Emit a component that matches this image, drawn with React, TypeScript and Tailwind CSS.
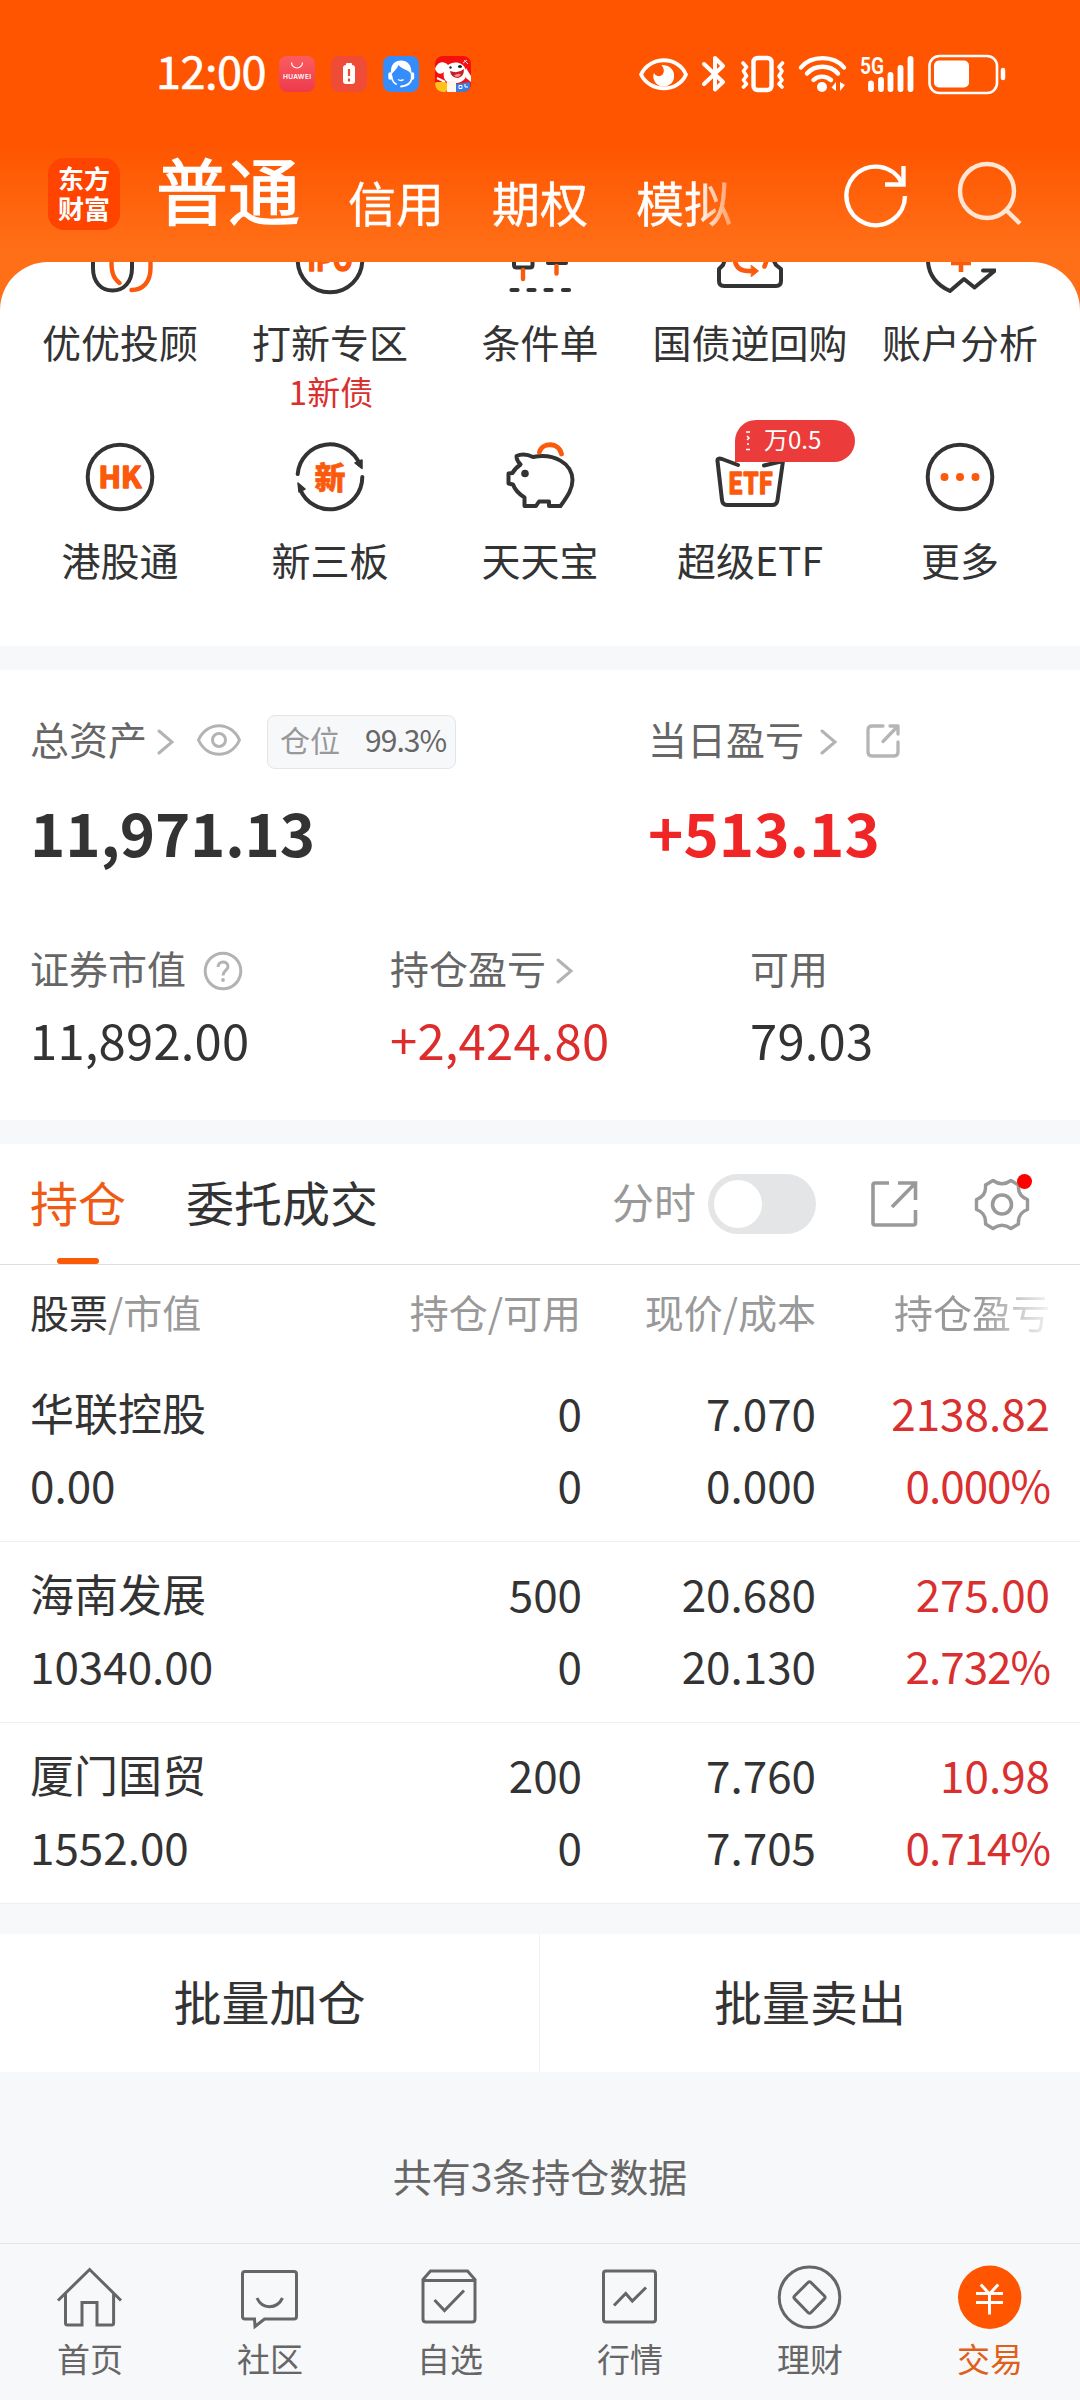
import type { ReactNode } from 'react'

const INK = '#333333'
const ORANGE = '#fb5a0c'

function Chevron() {
  return (
    <svg width="18" height="28" viewBox="0 0 18 28" fill="none" stroke="#b3b3b3" strokeWidth="3" strokeLinecap="round">
      <path d="M2 3 L15 14 L2 25" />
    </svg>
  )
}

function StatusBar() {
  return (
    <div className="flex h-[146px] items-start pt-[53px] pl-[156px] text-white">
      <span className="w-[123px] -translate-y-[3px] text-[45px] leading-[40px] tracking-[-0.5px] [-webkit-text-stroke:0.6px_white]">12:00</span>
      <div className="flex gap-4 pt-[3px]">
        <svg width="36" height="36" viewBox="0 0 36 36">
          <defs>
            <linearGradient id="store" x1="0" y1="0" x2="0" y2="1">
              <stop offset="0" stopColor="#fb5d60" />
              <stop offset="1" stopColor="#ee3a4c" />
            </linearGradient>
          </defs>
          <rect width="36" height="36" rx="8" fill="url(#store)" />
          <path d="M12.500 6.500a5.500 5.500 0 0 0 11 0" fill="none" stroke="#fff" strokeWidth="1.200" />
          <text x="4" y="23" fontSize="6.600" fontWeight="600" fill="#fff" fontFamily="Inter, sans-serif" textLength="28">HUAWEI</text>
        </svg>
        <svg width="36" height="36" viewBox="0 0 36 36">
          <rect width="36" height="36" rx="8" fill="#ee4c36" />
          <rect x="15" y="7" width="6" height="3" rx="1" fill="#fff" />
          <rect x="12" y="9" width="12" height="19" rx="3" fill="#fff" />
          <path d="M18 13v7M18 22.500v3" stroke="#ee4a33" strokeWidth="2.200" />
        </svg>
        <svg width="36" height="36" viewBox="0 0 36 36">
          <rect width="36" height="36" rx="8" fill="#358cfb" />
          <path d="M8 19C7 8 12 4.500 18 4.500S29 8 28.500 19C26 13 19 14 15.500 9C14 13 11 15 8 19Z" fill="#fff" />
          <path d="M7 18v4M29.500 18v4" stroke="#fff" strokeWidth="3.400" strokeLinecap="round" />
          <path d="M8.500 20C9 25 11 27 13 28M29 22c-1 5-5 8-11 8.500" fill="none" stroke="#fff" strokeWidth="1.800" strokeLinecap="round" />
          <path d="M15 23.500q3 2 5.500 0" fill="none" stroke="#fff" strokeWidth="1.500" />
        </svg>
        <svg width="36" height="36" viewBox="0 0 36 36">
          <clipPath id="mascot"><rect width="36" height="36" rx="8" /></clipPath>
          <g clipPath="url(#mascot)">
            <rect width="36" height="36" fill="#f5100f" />
            <path d="M0 13C3 5 9 5 13 9C18 5 28 5 31 14C33 21 29 26 22 27H14C9 25 8 20 9 16C6 19 2 18 0 13Z" fill="#fff" />
            <path d="M31 12L36 20V26L31 22Z" fill="#fff" />
            <circle cx="15.500" cy="11.500" r="1.200" fill="#222" />
            <ellipse cx="25" cy="10.500" rx="2" ry="1.500" fill="#222" />
            <path d="M15 15Q23 18 29 13Q29 21 23 22Q16 22 15 15Z" fill="#c51f28" />
            <path d="M19 19.500Q23 16.500 26 18.500Q23 23 19 19.500Z" fill="#ff8a8a" />
            <path d="M2 22L10 26" stroke="#fff" strokeWidth="2" />
            <rect y="26" width="12" height="10" rx="2" fill="#ffc21a" />
            <path d="M12 25h9v11h-9z" fill="#fff6ec" />
            <path d="M21 28l14-2v10H21z" fill="#3a7de0" />
            <path d="M24 29.500h3v3h-3zM30 28v3h3" fill="none" stroke="#fff" />
            <path d="M28 7l4-3M29 4l4 4" stroke="#cfe0ff" />
          </g>
        </svg>
      </div>
      <div className="ml-[167px]">
        <svg width="368" height="42" viewBox="638 52 368 42" fill="none" stroke="#fff" strokeLinecap="round" strokeLinejoin="round">
          <path d="M641 73.500C650 54.500 678 54.500 686 73.500C678 92 650 92 641 73.500Z" strokeWidth="3.800" />
          <path d="M661.500 64C671 64 675 70 674 77C672 87 658 89 654 79C653 76 653 74 654 72C656 76 661 76 663 73C664.500 70 664 67 661.500 64Z" fill="#fff" stroke="none" />
          <path d="M704 63L723 81L715 88.500V57L723 65L704 83" strokeWidth="4" />
          <rect x="753.500" y="57" width="18" height="32" rx="4" strokeWidth="4.400" />
          <path d="M743 62l3.500 4-3 4 3 5-3 4 3 4-3 3M782.500 62l-3.500 4 3 4-3 5 3 4-3 4 3 3" strokeWidth="3.600" />
          <path d="M801 66.500C811 54 834 54 844 66.500M807 72.500C815 63.500 830 63.500 838 72.500M813.500 79C818 74.500 826 74.500 831 79" strokeWidth="4.400" />
          <circle cx="822" cy="86" r="5" fill="#fff" stroke="none" />
          <path d="M836 81v9l-4.500-3.500zM840 81v9l5-6z" fill="#fff" stroke="none" />
          <path d="M871 82.500v5.500M881 79v9M890.500 74v14M900.500 67v21M910.500 58v30" strokeWidth="5.800" />
          <rect x="929.500" y="55" width="67.500" height="37" rx="10" strokeWidth="2.600" />
          <rect x="934" y="59.500" width="35" height="27" rx="5" fill="#fff" stroke="none" />
          <path d="M1003 69v8" strokeWidth="4.500" />
          <text x="860" y="72.500" fontSize="23" fontWeight="600" fill="#fff" stroke="none" fontFamily="Roboto, sans-serif" textLength="24" lengthAdjust="spacingAndGlyphs">5G</text>
        </svg>
      </div>
    </div>
  )
}

function TopBar() {
  return (
    <div className="flex h-[116px] items-start pl-12 text-white">
      <div className="mt-3 flex h-[72px] w-[72px] flex-col items-center justify-center rounded-2xl bg-[#ff4400] text-[26px] leading-[30px] font-bold">
        <span className="-translate-y-px">东方</span>
        <span className="-translate-y-px">财富</span>
      </div>
      <div className="ml-9 flex items-baseline gap-12 text-[48px] leading-none [mask-image:linear-gradient(to_right,black_540px,transparent_596px)]">
        <span className="text-[72px] leading-[84px] [-webkit-text-stroke:1.4px_white]">普通</span>
        <span className="translate-y-[3px] [-webkit-text-stroke:0.4px_white]">信用</span>
        <span className="translate-y-[3px] [-webkit-text-stroke:0.4px_white]">期权</span>
        <span className="translate-y-[3px] [-webkit-text-stroke:0.4px_white]">模拟</span>
      </div>
      <svg className="ml-[109px]" width="190" height="90" viewBox="841 146 190 90" fill="none" stroke="#fff" strokeWidth="4.400">
        <path d="M905 196A29.300 29.300 0 1 1 902 183" />
        <path d="M903.500 166V184.500H885" />
        <g stroke="#ffe5d3">
          <circle cx="987" cy="191" r="27" />
          <path d="M1006.500 210.500L1020 223.500" />
        </g>
      </svg>
    </div>
  )
}

const cutIcons: { label: string; note?: string; icon: ReactNode }[] = [
  {
    label: '优优投顾',
    icon: (
      <>
        <path d="M9 0V6C9 20 17 28.500 28.500 28.500S48 20 48 6V0" stroke={INK} />
        <path d="M27.500 0C27.500 10 29 16 35.500 21M66.500 0V6C66.500 20 59 28 47.500 28" stroke={ORANGE} strokeWidth="4.400" />
      </>
    ),
  },
  {
    label: '打新专区',
    note: '1新债',
    icon: (
      <>
        <circle cx="36" cy="-2" r="32.300" stroke={INK} />
        <text x="13.500" y="9" fontSize="30" fontWeight="700" fill={ORANGE} stroke={ORANGE} strokeWidth="1.600" fontFamily="'Noto Sans CJK SC', sans-serif" textLength="45" lengthAdjust="spacingAndGlyphs">IPO</text>
      </>
    ),
  },
  {
    label: '条件单',
    icon: (
      <>
        <path d="M10 0V3Q10 5.500 12.500 5.500H26Q28.500 5.500 28.500 3V0M44 1H62" stroke={INK} />
        <path d="M19 8V17M52.500 4V11.500" stroke={ORANGE} strokeWidth="4.400" />
        <path d="M7.500 28H13.500M24.500 28H30.500M41.500 28H47.500M59 28H65" stroke={INK} strokeWidth="4.200" />
      </>
    ),
  },
  {
    label: '国债逆回购',
    icon: (
      <>
        <path d="M10.500 -1L9 3L5 7V19Q5 24 10 24H62Q67 24 67 19V7L62 3L60 -1" stroke={INK} />
        <path d="M21 -1Q23 9 34 9H38M52.500 -1L50.500 4.500" stroke={ORANGE} strokeWidth="4.600" />
        <path d="M37.500 3.500L44.500 9L37.500 14.500Z" fill={ORANGE} stroke={ORANGE} strokeWidth="1" />
      </>
    ),
  },
  {
    label: '账户分析',
    icon: (
      <>
        <path d="M4 0C5 13 13 23 26 29L40 17L50.500 25.500L71 8.500H59" stroke={INK} />
        <path d="M27 1H47M37 1V10" stroke={ORANGE} strokeWidth="4.600" strokeLinecap="butt" />
      </>
    ),
  },
]

const fullIcons: { label: string; badge?: string; icon: ReactNode }[] = [
  {
    label: '港股通',
    icon: (
      <>
        <circle cx="36" cy="36" r="32.300" stroke={INK} />
        <text x="14.500" y="47" fontSize="30" fontWeight="700" fill={ORANGE} stroke={ORANGE} strokeWidth="1.600" fontFamily="'Noto Sans CJK SC', sans-serif" textLength="43" lengthAdjust="spacingAndGlyphs">HK</text>
      </>
    ),
  },
  {
    label: '新三板',
    icon: (
      <>
        <path d="M3.700 33A32.300 32.300 0 0 1 66 24M68.300 36A32.300 32.300 0 0 1 6 48" stroke={INK} />
        <path d="M61 22L68 19V27.500ZM4 42L5 51L11 48Z" fill={INK} stroke={INK} strokeWidth="1.500" />
        <text x="20.500" y="47.500" fontSize="31" fontWeight="900" fill={ORANGE} stroke={ORANGE} strokeWidth=".6" fontFamily="'Noto Sans CJK SC', sans-serif">新</text>
      </>
    ),
  },
  {
    label: '天天宝',
    icon: (
      <>
        <path d="M12.500 15C17 13 23 13 29 16C50 12 68 22 68.500 39C68.500 49 62 57 56.500 65H45V60.500H35L32 65H20.500V56.500C15 53 11 49 9 43.500L4.500 42.500V32.500L8.500 32C10 29 13 26 16.500 23.500C14 21 12.500 18 12.500 15Z" stroke={INK} />
        <circle cx="21" cy="32.500" r="3.800" fill={INK} stroke="none" />
        <path d="M35.500 11C38 1.500 55 .5 57.500 13" stroke={ORANGE} strokeWidth="4.800" />
      </>
    ),
  },
  {
    label: '超级ETF',
    badge: '万0.5',
    icon: (
      <>
        <path d="M24 24L8 18Q3 16.500 3.500 20L8 59Q8.500 64 13 64H58Q63 64 63.500 59L69 20L50 24.500" stroke={INK} />
        <text x="14" y="53" fontSize="30" fontWeight="700" fill={ORANGE} stroke={ORANGE} strokeWidth="1.600" fontFamily="'Noto Sans CJK SC', sans-serif" textLength="45" lengthAdjust="spacingAndGlyphs">ETF</text>
      </>
    ),
  },
  {
    label: '更多',
    icon: (
      <>
        <circle cx="36" cy="36" r="32.300" stroke={INK} />
        <path d="M20.500 36h.01M36 36h.01M51.500 36h.01" stroke={ORANGE} strokeWidth="8" />
      </>
    ),
  },
]

function Shortcuts() {
  return (
    <section className="h-[384px] overflow-hidden rounded-t-[48px] bg-white px-[15px] text-[39px] text-[#333]">
      <div className="grid h-[179px] grid-cols-5">
        {cutIcons.map((it) => (
          <div key={it.label} className="flex flex-col items-center">
            <svg width="72" height="36" viewBox="0 0 72 36" fill="none" strokeWidth="4" strokeLinecap="round" strokeLinejoin="round">
              {it.icon}
            </svg>
            <span className="mt-[21px] leading-[44px] whitespace-nowrap">{it.label}</span>
            {it.note && <span className="mt-[8px] ml-[2px] text-[33px] leading-[40px] text-[#d9302f]">{it.note}</span>}
          </div>
        ))}
      </div>
      <div className="grid grid-cols-5">
        {fullIcons.map((it) => (
          <div key={it.label} className="relative flex flex-col items-center">
            <svg width="72" height="72" viewBox="0 0 72 72" fill="none" strokeWidth="4" strokeLinecap="round" strokeLinejoin="round">
              {it.icon}
            </svg>
            <span className="mt-[24px] leading-[44px] whitespace-nowrap">{it.label}</span>
            {it.badge && (
              <span className="absolute -top-[21px] left-[90px] flex h-[42px] w-[120px] items-center rounded-full rounded-bl-none bg-[#eb3b3b] pl-[11px] text-[24px] text-white">
                <svg className="mr-[13px]" width="5" height="20" viewBox="0 0 5 20" stroke="#fff" strokeWidth="1.500">
                  <path d="M0 1H4M1 5L3 7L1 9M1 13H3M0 18.500H4" fill="none" />
                </svg>
                <span className="-translate-y-[2px]">{it.badge}</span>
              </span>
            )}
          </div>
        ))}
      </div>
    </section>
  )
}

function Assets() {
  return (
    <section className="mt-6 h-[450px] bg-white pl-[30px] text-[39px] text-[#666]">
      <div className="flex pt-[45px]">
        <div className="w-[618px]">
          <div className="flex h-[54px] items-center">
            <span className="-translate-y-[4px]">总资产</span>
            <span className="ml-[10px]"><Chevron /></span>
            <svg className="ml-[21px] -translate-y-[2px]" width="46" height="34" viewBox="0 0 46 34" fill="none" stroke="#b3b3b3" strokeWidth="3">
              <path d="M2.500 17C11 -2 35 -2 43.500 17C35 36 11 36 2.500 17Z" strokeLinejoin="round" />
              <circle cx="23" cy="17" r="6.500" />
            </svg>
            <div className="ml-[25px] flex h-[54px] w-[189px] items-center justify-between rounded-lg border border-[#e4e5e8] bg-[#f7f8fa] pr-[9px] pl-[12px] text-[30px]">
              <span className="-translate-y-[3px] text-[#999]">仓位</span>
              <span className="-translate-y-[3px] tracking-[-1px]">99.3%</span>
            </div>
          </div>
          <div className="mt-[22px] text-[60px] leading-[80px] font-bold tracking-[-0.200px] text-[#333]">11,971.13</div>
        </div>
        <div>
          <div className="flex h-[54px] items-center">
            <span className="-translate-y-[4px]">当日盈亏</span>
            <span className="ml-[16px]"><Chevron /></span>
            <svg className="ml-[27px] -translate-y-px" width="36" height="36" viewBox="0 0 36 36" fill="none" stroke="#b5b5b5" strokeWidth="3.300" strokeLinecap="round" strokeLinejoin="round">
              <path d="M18 3H7Q3 3 3 7V29Q3 33 7 33H29Q33 33 33 29V19M25 3H33V11M32 4L18 18.500" />
            </svg>
          </div>
          <div className="mt-[22px] text-[60px] leading-[80px] font-bold text-[#f02626]">+513.13</div>
        </div>
      </div>
      <div className="mt-[74px] grid grid-cols-[360px_360px_300px]">
        <div>
          <div className="flex h-[48px] items-center">
            <span className="-translate-y-[2px]">证券市值</span>
            <svg className="ml-[17px] translate-y-[2px]" width="40" height="40" viewBox="0 0 40 40" fill="none" stroke="#b3b3b3">
              <circle cx="20" cy="20" r="17.800" strokeWidth="3" />
              <path d="M15 16C15 9.500 25 9.500 25 15.500C25 19.500 20 19.500 20 24.500" strokeWidth="3" />
              <circle cx="20" cy="29" r="1.900" fill="#b3b3b3" stroke="none" />
            </svg>
          </div>
          <div className="mt-[16px] text-[49px] leading-[60px] tracking-[0.200px] text-[#333]">11,892.00</div>
        </div>
        <div>
          <div className="flex h-[48px] items-center">
            <span className="-translate-y-[2px]">持仓盈亏</span>
            <span className="ml-[10px] translate-y-[2px]"><Chevron /></span>
          </div>
          <div className="mt-[16px] text-[49px] leading-[60px] tracking-[0.200px] text-[#dc2c2c]">+2,424.80</div>
        </div>
        <div>
          <div className="flex h-[48px] items-center">
            <span className="-translate-y-[2px]">可用</span>
          </div>
          <div className="mt-[16px] text-[49px] leading-[60px] tracking-[0.200px] text-[#333]">79.03</div>
        </div>
      </div>
    </section>
  )
}

const holdings = [
  { name: '华联控股', value: '0.00', held: '0', usable: '0', price: '7.070', cost: '0.000', gain: '2138.82', rate: '0.000%' },
  { name: '海南发展', value: '10340.00', held: '500', usable: '0', price: '20.680', cost: '20.130', gain: '275.00', rate: '2.732%' },
  { name: '厦门国贸', value: '1552.00', held: '200', usable: '0', price: '7.760', cost: '7.705', gain: '10.98', rate: '0.714%' },
]

function Holdings() {
  return (
    <section className="mt-6 bg-white">
      <div className="flex h-[121px] items-start border-b border-[#dddddd] pl-[30px]">
        <div className="flex h-[120px] w-[96px] flex-col items-center justify-between">
          <span className="mt-[27px] text-[48px] leading-[60px] whitespace-nowrap text-[#f05a12]">持仓</span>
          <span className="h-[6px] w-[42px] rounded-full bg-[#fb5a08]" />
        </div>
        <span className="mt-[27px] ml-[60px] text-[48px] leading-[60px] text-[#333]">委托成交</span>
        <span className="mt-[30px] ml-[234px] text-[42px] leading-[54px] text-[#999]">分时</span>
        <div className="mt-[30px] ml-[12px] flex h-[60px] w-[108px] items-center rounded-full bg-[#e4e5e7] pl-[6px]">
          <span className="h-12 w-12 rounded-full bg-white" />
        </div>
        <svg className="mt-[36px] ml-[54px]" width="48" height="48" viewBox="0 0 48 48" fill="none" stroke="#999" strokeWidth="3.600">
          <path d="M19 3H5Q3 3 3 5V43Q3 45 5 45H43Q45.500 45 45.500 43V30M28 3H45.500V20M45 3.500L22 27" />
        </svg>
        <svg className="mt-[26px] ml-[52px]" width="66" height="66" viewBox="970 1170 66 66" fill="none">
          <path
            d="M993 1180.500Q1002 1187 1011 1180.500L1018.500 1185Q1017.500 1196 1027.500 1199.500V1209.500Q1017.500 1213 1018.500 1224L1011 1228.500Q1002 1222 993 1228.500L985.500 1224Q986.500 1213 976.500 1209.500V1199.500Q986.500 1196 985.500 1185Z"
            stroke="#999"
            strokeWidth="3.400"
            strokeLinejoin="round"
          />
          <circle cx="1002" cy="1204.500" r="9.500" stroke="#999" strokeWidth="3.600" />
          <circle cx="1024.500" cy="1181.500" r="7.500" fill="#ff0000" />
        </svg>
      </div>

      <div className="grid h-[96px] grid-cols-[250px_301px_235px_234px] px-[30px] pt-[20px] text-[39px] leading-[52px] whitespace-nowrap text-[#999]">
        <div><span className="text-[#333]">股票</span>/市值</div>
        <div className="text-right">持仓/可用</div>
        <div className="text-right">现价/成本</div>
        <div className="pl-[78px] [mask-image:linear-gradient(to_right,black_164px,transparent_244px)]">持仓盈亏</div>
      </div>

      {holdings.map((h) => (
        <div
          key={h.name}
          className="grid h-[181px] grid-cols-[250px_302px_234px_234px] content-start border-b border-[#eeeeee] px-[30px] pt-[15px] text-right text-[44px] leading-[72px] whitespace-nowrap text-[#333]"
        >
          <div className="text-left">{h.name}</div>
          <div>{h.held}</div>
          <div>{h.price}</div>
          <div className="text-[#d92f2f]">{h.gain}</div>
          <div className="text-left">{h.value}</div>
          <div>{h.usable}</div>
          <div>{h.cost}</div>
          <div className="tracking-[-1px] text-[#d92f2f]">{h.rate}</div>
        </div>
      ))}
    </section>
  )
}

const navItems: { label: string; active?: boolean; icon: ReactNode }[] = [
  {
    label: '首页',
    icon: <path d="M4 39.500L35.600 8.500L67 39.500M11.500 33V62Q11.500 64 13.500 64H28V41.500H43V64H57.600Q59.600 64 59.600 62V33" />,
  },
  {
    label: '社区',
    icon: <path d="M11 10.500H60Q62.500 10.500 62.500 13V55.500Q62.500 58 60 58H30.500L21 65.500L20.500 58H11Q8.500 58 8.500 55.500V13Q8.500 10.500 11 10.500ZM23 37C28 48.500 43 48.500 48.500 37" />,
  },
  {
    label: '自选',
    icon: <path d="M9 18.500L16.500 10H53.500L61 18.500V58Q61 61 58 61H12Q9 61 9 58ZM9 19.500H61M20.500 39L30.500 49.500L50 29.500" />,
  },
  {
    label: '行情',
    icon: <path d="M12 10H59Q61.500 10 61.500 12.500V58.500Q61.500 61 59 61H12Q9.500 61 9.500 58.500V12.500Q9.500 10 12 10ZM20 44.500L31.700 32.500L38.300 40L52 26.500" />,
  },
  {
    label: '理财',
    icon: (
      <>
        <circle cx="35.500" cy="36.300" r="30.300" />
        <path d="M34 21.500Q35.500 20 37 21.500L50.500 35Q51.700 36.300 50.500 37.600L37 51.500Q35.500 53 34 51.500L20.500 37.600Q19.300 36.300 20.500 35Z" />
      </>
    ),
  },
  {
    label: '交易',
    active: true,
    icon: (
      <>
        <circle cx="35.700" cy="36.300" r="31.700" fill="#ff5500" stroke="none" />
        <path d="M26.800 23.500L35.500 33L44.200 23.500M35.500 33V53.500M22 32.500H49M22 41.500H49" stroke="#fff" />
      </>
    ),
  },
]

function BottomNav() {
  return (
    <nav className="grid h-[157px] grid-cols-6 border-t border-[#e3e4e6] pt-[17px]">
      {navItems.map((n) => (
        <div key={n.label} className={n.active ? 'flex flex-col items-center text-[#e0601a]' : 'flex flex-col items-center text-[#666]'}>
          <svg width="72" height="72" viewBox="0 0 72 72" fill="none" stroke="#666" strokeWidth="3">
            {n.icon}
          </svg>
          <span className="mt-[5px] text-[33px] leading-[40px]">{n.label}</span>
        </div>
      ))}
    </nav>
  )
}

export default function App() {
  return (
    <div className="h-[2400px] w-[1080px] overflow-hidden bg-[#f7f8fa] font-['Noto_Sans_CJK_SC',sans-serif]">
      <div className="bg-[linear-gradient(to_bottom,#ff5500_0px,#ff5500_145px,#ff6f17_250px,#ff6f17_310px,#ffffff_311px)]">
        <StatusBar />
        <TopBar />
        <Shortcuts />
      </div>
      <Assets />
      <Holdings />
      <div className="mt-[30px] grid h-[138px] grid-cols-2 bg-white text-center text-[48px] leading-[132px] text-[#333]">
        <div className="border-r border-[#f0f0f2]">批量加仓</div>
        <div>批量卖出</div>
      </div>
      <div className="h-[171px] pt-[77px] text-center text-[39px] leading-[52px] text-[#666]">共有3条持仓数据</div>
      <BottomNav />
    </div>
  )
}
